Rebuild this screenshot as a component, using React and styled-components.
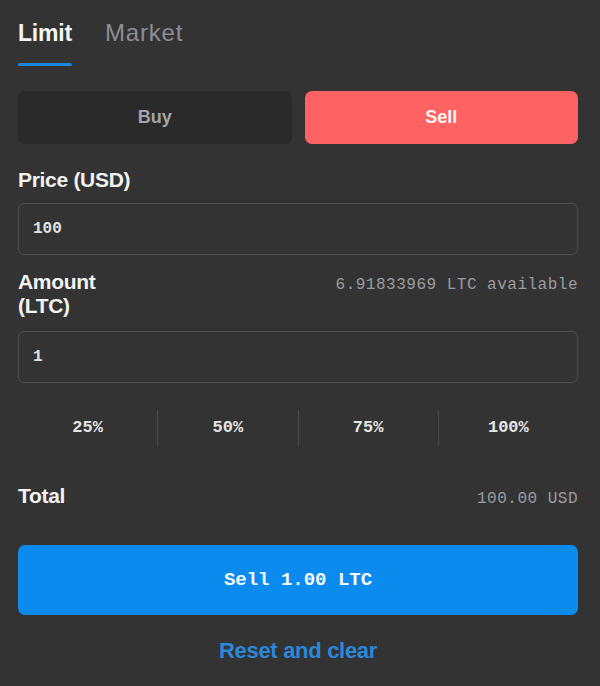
import React from 'react'
import styled, { createGlobalStyle } from 'styled-components'

const GlobalStyle = createGlobalStyle`
  html, body {
    margin: 0;
    padding: 0;
    background: #333333;
  }
  * { box-sizing: border-box; }
`

const sans = `"Liberation Sans", Arial, sans-serif`
const mono = `"Liberation Mono", "DejaVu Sans Mono", monospace`

const Panel = styled.div`
  width: 600px;
  height: 686px;
  background: #333333;
  padding: 19px 22px 0 18px;
  display: flex;
  flex-direction: column;
  font-family: ${sans};
`

const TabBar = styled.div`
  display: flex;
  gap: 33px;
`

const Tab = styled.div`
  display: flex;
  flex-direction: column;
  font-size: ${({ active }) => (active ? '23px' : '24px')};
  line-height: 28px;
  font-weight: ${({ active }) => (active ? 700 : 400)};
  letter-spacing: ${({ active }) => (active ? '-0.2px' : '0.8px')};
  color: ${({ active }) => (active ? '#f4f4f4' : '#8e8e94')};

  &::after {
    content: '';
    display: block;
    height: 3px;
    margin-top: 16px;
    border-radius: 2px;
    background: ${({ active }) => (active ? '#1a84e0' : 'transparent')};
  }
`

const SideRow = styled.div`
  display: flex;
  gap: 13px;
  margin-top: 25px;
`

const SideButton = styled.button`
  flex: 1;
  height: 53px;
  border: none;
  border-radius: 7px;
  font-family: ${sans};
  font-size: 18px;
  font-weight: 700;
  background: ${({ selected }) => (selected ? '#ff6262' : '#2a2a2a')};
  color: ${({ selected }) => (selected ? '#fff3f3' : '#a4a4aa')};
`

const Label = styled.div`
  font-size: 21px;
  line-height: 24px;
  font-weight: 700;
  letter-spacing: -0.3px;
  color: #f2f2f2;
  margin-top: ${({ top }) => top || 0}px;
  max-width: ${({ narrow }) => (narrow ? '100px' : 'none')};
`

const Field = styled.div`
  height: 52px;
  margin-top: ${({ top }) => top}px;
  border: 1px solid #4d4d4f;
  border-radius: 6px;
  display: flex;
  align-items: center;
  padding-left: 14px;
  font-family: ${mono};
  font-size: 16px;
  font-weight: 700;
  color: #e2e2e2;
`

const AmountRow = styled.div`
  display: flex;
  justify-content: space-between;
  align-items: flex-start;
  margin-top: 15px;
`

const Muted = styled.span`
  font-family: ${mono};
  font-size: 16px;
  letter-spacing: 0.5px;
  color: #9c9ca2;
  padding-top: ${({ pad }) => pad || 0}px;
`

const PercentRow = styled.div`
  display: flex;
  height: 35px;
  margin-top: 27px;
`

const Percent = styled.div`
  flex: 1;
  display: flex;
  align-items: center;
  justify-content: center;
  font-family: ${mono};
  font-size: 17px;
  font-weight: 700;
  color: #e6e6e6;

  & + & {
    border-left: 1px solid #4a4a4c;
  }
`

const TotalRow = styled.div`
  display: flex;
  justify-content: space-between;
  align-items: flex-start;
  margin-top: 39px;
`

const SubmitButton = styled.button`
  height: 70px;
  margin-top: 37px;
  border: none;
  border-radius: 7px;
  background: #0b8bee;
  color: #f6f8ff;
  font-family: ${mono};
  font-size: 19px;
  font-weight: 700;
`

const ResetLink = styled.a`
  margin-top: 23px;
  align-self: center;
  font-size: 22px;
  line-height: 26px;
  font-weight: 700;
  letter-spacing: -0.3px;
  color: #2a88da;
`

const App = () => {
  const percents = ['25%', '50%', '75%', '100%']

  return (
    <Panel>
      <GlobalStyle />

      <TabBar>
        <Tab active>Limit</Tab>
        <Tab>Market</Tab>
      </TabBar>

      <SideRow>
        <SideButton>Buy</SideButton>
        <SideButton selected>Sell</SideButton>
      </SideRow>

      <Label top={24}>Price (USD)</Label>
      <Field top={11}>100</Field>

      <AmountRow>
        <Label narrow>Amount (LTC)</Label>
        <Muted pad={6}>6.91833969 LTC available</Muted>
      </AmountRow>
      <Field top={13}>1</Field>

      <PercentRow>
        {percents.map((p) => <Percent key={p}>{p}</Percent>)}
      </PercentRow>

      <TotalRow>
        <Label>Total</Label>
        <Muted pad={6}>100.00 USD</Muted>
      </TotalRow>

      <SubmitButton>Sell 1.00 LTC</SubmitButton>

      <ResetLink>Reset and clear</ResetLink>
    </Panel>
  )
}

export default App
